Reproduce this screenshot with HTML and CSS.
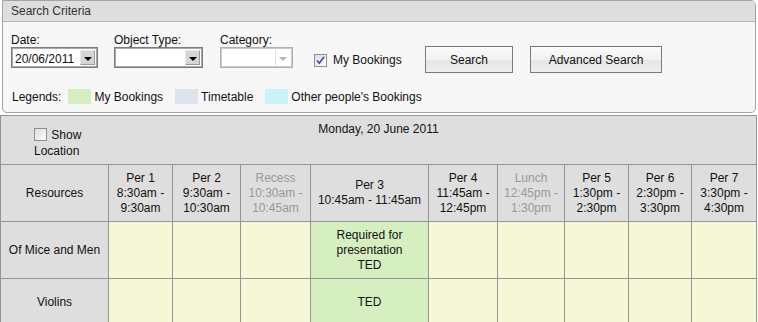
FILE: index.html
```html
<!DOCTYPE html>
<html lang="en">
<head>
    <meta charset="UTF-8">
    <title>Resource Bookings</title>
    <link rel="stylesheet" href="styles.css">
</head>
<body>
    <div class="panel">
        <div class="panel-title">Search Criteria</div>
        <div class="panel-body">
            <div class="fields">
                <div class="field field-date">
                    <label>Date:</label>
                    <div class="combo">
                        <span class="combo-value">20/06/2011</span>
                        <span class="combo-btn"><i class="arrow"></i></span>
                    </div>
                </div>
                <div class="field field-type">
                    <label>Object Type:</label>
                    <div class="combo">
                        <span class="combo-value"></span>
                        <span class="combo-btn"><i class="arrow"></i></span>
                    </div>
                </div>
                <div class="field field-category">
                    <label>Category:</label>
                    <div class="combo disabled">
                        <span class="combo-value"></span>
                        <span class="combo-btn"><i class="arrow"></i></span>
                    </div>
                </div>
                <div class="check-group">
                    <span class="checkbox checked">
                        <svg width="11" height="11" viewBox="0 0 11 11"><path d="M2 5.5 L4.3 8.3 L9 1.8" fill="none" stroke="#3b4f9a" stroke-width="1.6"/></svg>
                    </span>
                    <span>My Bookings</span>
                </div>
                <button class="btn btn-search">Search</button>
                <button class="btn btn-advanced">Advanced Search</button>
            </div>
            <div class="legends">
                <span>Legends:</span>
                <span class="swatch mine"></span><span>My Bookings</span>
                <span class="swatch timetable"></span><span>Timetable</span>
                <span class="swatch others"></span><span>Other people's Bookings</span>
            </div>
        </div>
    </div>

    <table class="grid">
        <colgroup>
            <col style="width:108px">
            <col style="width:64px">
            <col style="width:68px">
            <col style="width:70px">
            <col style="width:118px">
            <col style="width:69px">
            <col style="width:67px">
            <col style="width:64px">
            <col style="width:63px">
            <col style="width:65px">
        </colgroup>
        <tr class="row-day">
            <td colspan="10">
                <div class="day-bar">
                    <div class="show-loc">
                        <span class="checkbox"></span> Show<br>Location
                    </div>
                    <div class="day-title">Monday, 20 June 2011</div>
                    <div></div>
                </div>
            </td>
        </tr>
        <tr class="row-periods">
            <th>Resources</th>
            <th>Per 1<br>8:30am -<br>9:30am</th>
            <th>Per 2<br>9:30am -<br>10:30am</th>
            <th class="break">Recess<br>10:30am -<br>10:45am</th>
            <th>Per 3<br>10:45am - 11:45am</th>
            <th>Per 4<br>11:45am -<br>12:45pm</th>
            <th class="break">Lunch<br>12:45pm -<br>1:30pm</th>
            <th>Per 5<br>1:30pm -<br>2:30pm</th>
            <th>Per 6<br>2:30pm -<br>3:30pm</th>
            <th>Per 7<br>3:30pm -<br>4:30pm</th>
        </tr>
        <tr class="row-resource">
            <th>Of Mice and Men</th>
            <td></td>
            <td></td>
            <td></td>
            <td class="booked">Required for<br>presentation<br>TED</td>
            <td></td>
            <td></td>
            <td></td>
            <td></td>
            <td></td>
        </tr>
        <tr class="row-resource row-last">
            <th>Violins</th>
            <td></td>
            <td></td>
            <td></td>
            <td class="booked">TED</td>
            <td></td>
            <td></td>
            <td></td>
            <td></td>
            <td></td>
        </tr>
    </table>
</body>
</html>
```

FILE: styles.css
```css
body {
    margin: 0;
    background: #fff;
    font-family: "Liberation Sans", Arial, sans-serif;
    font-size: 12px;
    color: #111;
}
.panel {
    width: 754px;
    box-sizing: border-box;
    margin: 0 0 2px 2px;
    border: 1px solid #a3a3a3;
    border-radius: 0 5px 5px 5px;
    background: #f7f7f7;
    overflow: hidden;
}
.panel-title {
    height: 20px;
    line-height: 21px;
    padding-left: 8px;
    background: #dedede;
    border-bottom: 1px solid #b4b4b4;
    color: #333;
}
.panel-body {
    padding: 11px 0 8px 8px;
}
.fields {
    display: flex;
    align-items: flex-start;
}
.field label {
    display: block;
    line-height: 14px;
}
.field-date { width: 87px; margin-right: 16px; }
.field-type { width: 89px; margin-right: 17px; }
.field-category { width: 73px; margin-right: 21px; }
.combo {
    display: flex;
    height: 21px;
    box-sizing: border-box;
    border: 1px solid #7c7c7c;
    box-shadow: inset 0 0 0 1px #a8a8a8;
    background: #fff;
    padding: 2px 2px 2px 0;
}
.combo-value {
    flex: 1;
    padding-left: 3px;
    line-height: 18px;
}
.combo-btn {
    width: 15px;
    box-sizing: border-box;
    border: 1px solid #e8e8e8;
    border-right-color: #9a9a9a;
    border-bottom-color: #9a9a9a;
    background: #d6d6d6;
    display: flex;
    align-items: center;
    justify-content: center;
}
.arrow {
    width: 0;
    height: 0;
    margin-top: 2px;
    border-left: 4px solid transparent;
    border-right: 4px solid transparent;
    border-top: 4px solid #000;
}
.combo.disabled {
    border-color: #b0b0b0;
    box-shadow: inset 0 0 0 1px #cacaca;
}
.combo.disabled .combo-btn {
    background: #fff;
    border: none;
    border-left: 1px solid #e0e0e0;
}
.combo.disabled .arrow {
    border-top-color: #b4b4b4;
}
.check-group {
    width: 111px;
    margin-top: 20px;
    display: flex;
    align-items: center;
    gap: 6px;
    line-height: 14px;
}
.checkbox {
    display: inline-flex;
    align-items: center;
    justify-content: center;
    width: 13px;
    height: 13px;
    box-sizing: border-box;
    border: 1px solid #8e8f8f;
    background: linear-gradient(135deg, #dcdcdc, #fdfdfd);
}
.btn {
    height: 27px;
    margin-top: 13px;
    border: 1px solid #7a7a7a;
    background: linear-gradient(#fbfbfb 0%, #f1f1f1 50%, #e6e6e6 51%, #ededed 100%);
    font-family: inherit;
    font-size: 12px;
    color: #111;
    padding: 0;
}
.btn-search { width: 88px; margin-right: 17px; }
.btn-advanced { width: 132px; }
.legends {
    display: flex;
    align-items: center;
    height: 15px;
    margin-top: 16px;
    padding-left: 1px;
    line-height: 14px;
}
.swatch {
    width: 23px;
    height: 15px;
    margin: 0 3px 0 12px;
}
.legends span:first-child + .swatch { margin-left: 7px; }
.mine { background: #d5edc0; }
.timetable { background: #dce4ee; }
.others { background: #c9f3f5; }

.grid {
    width: 756px;
    table-layout: fixed;
    border-collapse: collapse;
    margin-top: 1px;
}
.grid td, .grid th {
    border: 1px solid #959595;
    padding: 0;
    text-align: center;
    vertical-align: middle;
    font-weight: normal;
    line-height: 15px;
    background: #f6f7d7;
}
.grid th { background: #dedede; }
.row-day td {
    height: 48px;
    background: #dedede;
    vertical-align: top;
}
.day-bar {
    display: grid;
    grid-template-columns: 1fr auto 1fr;
}
.show-loc {
    text-align: left;
    padding: 11px 0 0 33px;
    line-height: 16px;
}
.show-loc .checkbox {
    vertical-align: -2px;
    margin-right: 1px;
}
.day-title {
    padding-top: 6px;
    line-height: 14px;
}
.row-periods th { height: 56px; }
.break { color: #999; }
.row-resource th, .row-resource td { height: 56px; }
.row-last th, .row-last td { height: 46px; }
.grid .booked { background: #d6efc1; }
```
